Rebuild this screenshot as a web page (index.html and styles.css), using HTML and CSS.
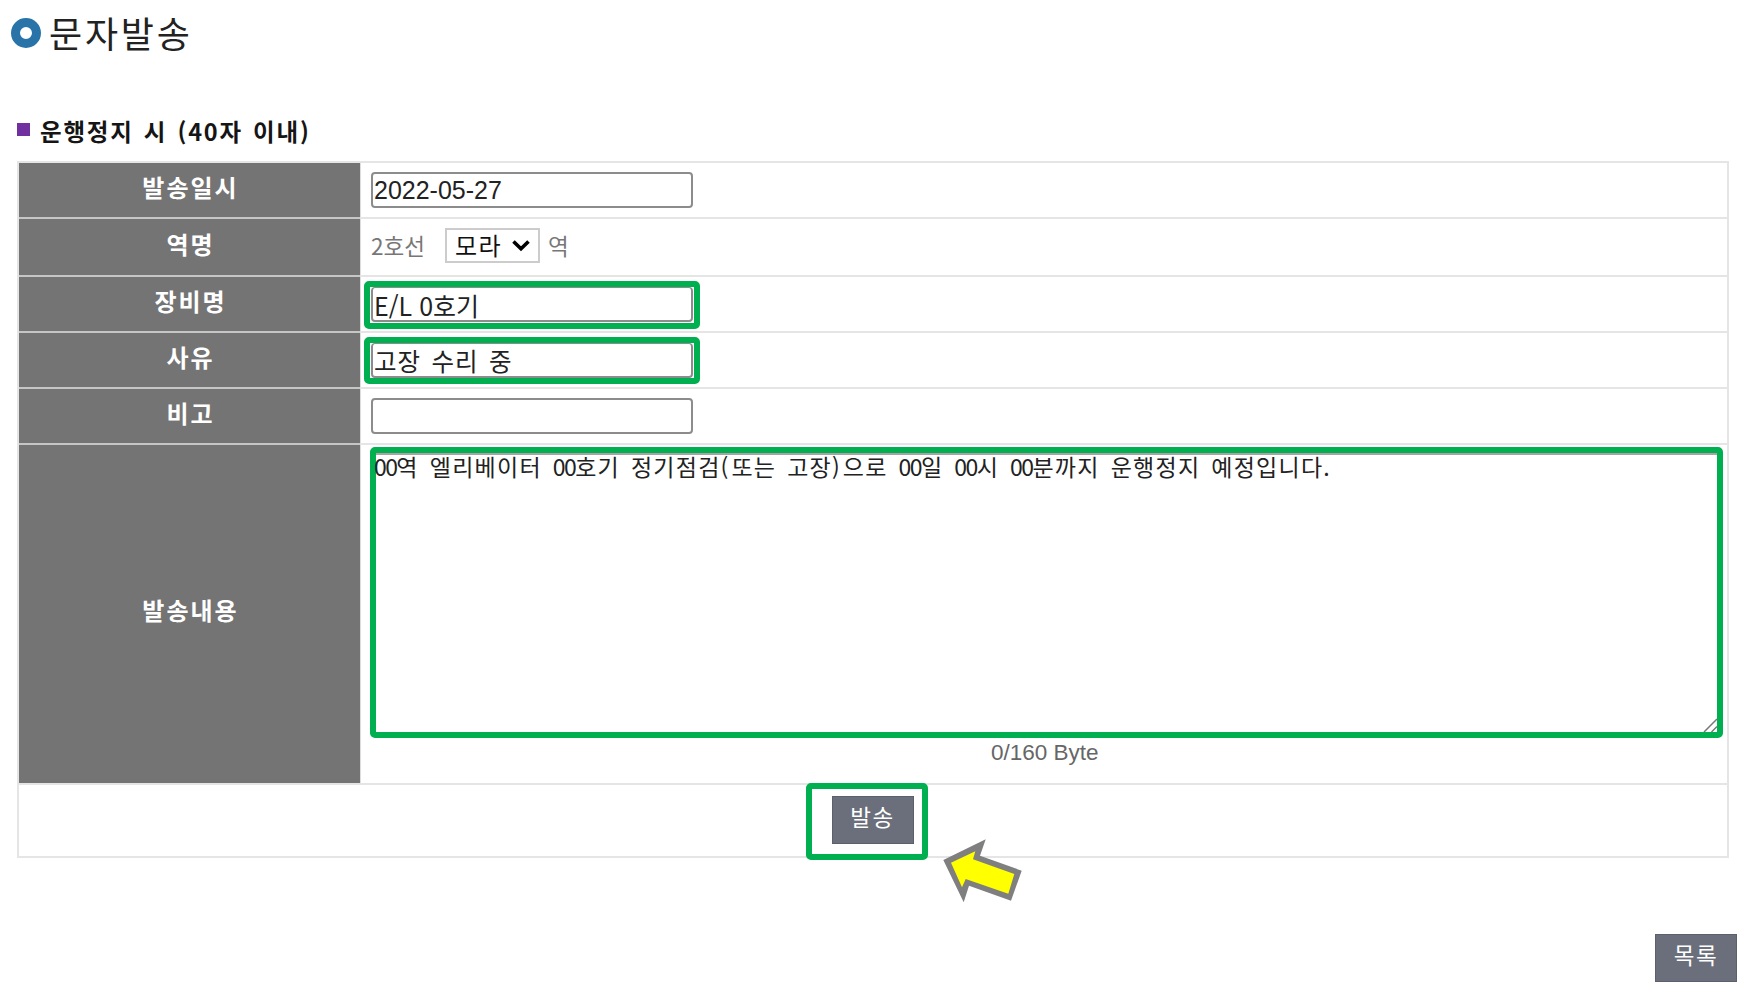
FILE: index.html
```html
<!DOCTYPE html>
<html lang="ko">
<head>
<meta charset="utf-8">
<title>문자발송</title>
<link rel="stylesheet" href="styles.css">
</head>
<body>
<main class="page">
  <header class="title">
    <span class="ring"></span>
    <h1>문자발송</h1>
  </header>
  <div class="subtitle">
    <span class="bullet"></span>
    <h2>운행정지 시 (40자 이내)</h2>
  </div>
  <form class="table">
    <div class="row">
      <label class="head">발송일시</label>
      <div class="cell"><input class="field date" value="2022-05-27"></div>
    </div>
    <div class="row row-station">
      <label class="head">역명</label>
      <div class="cell">
        <span class="line">2호선</span>
        <div class="select"><span>모라</span><svg width="18" height="13" viewBox="0 0 18 13"><path d="M1.500 2.500 9 9.800 16.500 2.500" fill="none" stroke="#000" stroke-width="3.600"/></svg></div>
        <span class="suffix">역</span>
      </div>
    </div>
    <div class="row">
      <label class="head">장비명</label>
      <div class="cell marked"><div class="mark"><input class="field device" value="E/L 0호기"></div></div>
    </div>
    <div class="row">
      <label class="head">사유</label>
      <div class="cell marked"><div class="mark mark-reason"><input class="field reason" value="고장 수리 중"></div></div>
    </div>
    <div class="row">
      <label class="head">비고</label>
      <div class="cell"><input class="field"></div>
    </div>
    <div class="row row-message">
      <label class="head">발송내용</label>
      <div class="cell message">
        <div class="message-box">
          <p><span class="num">00</span>역 엘리베이터 <span class="num">00</span>호기 정기점검<span class="paren">(</span>또는 고장<span class="paren">)</span>으로 <span class="num">00</span>일 <span class="num">00</span>시 <span class="num">00</span>분까지 운행정지 예정입니다.</p>
          <svg class="grip" width="14" height="14" viewBox="0 0 14 14"><path d="M1 14 14 1M8.500 14 14 8.500" fill="none" stroke="#777" stroke-width="1.500"/></svg>
        </div>
        <span class="counter">0/160 Byte</span>
      </div>
    </div>
    <div class="actions">
      <div class="send-mark"><button type="button" class="button">발송</button></div>
      <svg class="arrow" width="80" height="65" viewBox="0 0 80 65">
        <path fill="#7f7f7f" d="M.3 21 42.700.3 37 16.700 78.700 31.700 68 61.700 26 46.700 20.700 63.300Z"/>
        <path fill="#ff0" d="M8 23.700 32.300 12.300 30 20.300 71.300 35 65.300 54.700 22.700 40 19 48.300Z"/>
      </svg>
    </div>
  </form>
  <footer class="footer"><button type="button" class="button">목록</button></footer>
</main>
</body>
</html>
```
FILE: styles.css
```css
* { box-sizing: border-box; }
body {
  margin: 0;
  background: #fff;
  color: #222;
  font-family: "Noto Sans CJK KR", sans-serif;
}
.page { width: 1750px; height: 994px; overflow: hidden; padding: 17px 13px 0 11px; }
.title { display: flex; align-items: center; height: 32px; gap: 8px; }
.ring { width: 30px; height: 30px; border: 9px solid #2874a9; border-radius: 50%; }
h1, h2 { margin: 0; white-space: nowrap; }
h1 { padding-bottom: 3px; font-size: 36px; line-height: 36px; font-weight: 400; letter-spacing: 2.8px; color: #222; }
.subtitle { display: flex; align-items: center; gap: 10px; height: 30px; margin: 69px 0 13px 6px; }
.bullet { width: 13px; height: 13px; background: #7030a0; margin-bottom: 8px; }
h2 { padding-bottom: 4px; font-size: 23.5px; line-height: 30px; font-weight: 700; letter-spacing: 1.8px; word-spacing: 1.8px; color: #151515; }
.table { width: 1712px; margin-left: 6px; border: 2px solid #e5e5e5; }
.row { display: flex; height: 56px; border-bottom: 2px solid #e5e5e5; }
.row-station { height: 58px; }
.row-message { height: 340px; }
.head {
  width: 341px; flex: none;
  display: flex; align-items: center; justify-content: center;
  padding: 0 0 7px 2px;
  background: #747474; color: #fff;
  box-shadow: 0 2px 0 #c6c6c6;
  font-size: 24px; font-weight: 700; letter-spacing: 2px;
}
.row-message .head { box-shadow: none; padding-bottom: 9px; }
.cell { flex: 1; display: flex; align-items: center; padding-left: 10px; border-left: 1px solid #ddd; }
.cell.marked { padding: 1px 0 0 3px; }
.field {
  display: block; width: 322px; height: 36px; padding: 1px 2px;
  border: 2px solid #8c8c8c; border-radius: 4px; outline: 0;
  background: #fff; color: #222;
  font: 25px "Noto Sans CJK KR", sans-serif;
}
.date { font: 25px "Liberation Sans", sans-serif; padding-left: 1px; }
.mark { width: 336px; height: 48px; border: 6px solid #00b050; border-radius: 5px; background: #fff; padding-left: 1px; }
.mark-reason { height: 47px; margin-bottom: 1px; }
.mark .field { height: 35px; border-top-width: 1px; padding: 3px 1px 1px; }
.mark .reason { font-size: 24.5px; letter-spacing: 1px; word-spacing: 2.5px; padding-top: 2px; }
.line, .suffix { padding-bottom: 5px; color: #777; font-size: 22.5px; font-weight: 400; }
.line { width: 74px; }
.select {
  display: flex; align-items: center; justify-content: space-between;
  width: 95px; height: 35px; margin: 0 8px 3px 0; padding: 0 8px;
  border: 2px solid #ccc; color: #111; font-size: 24px;
}
.select span { letter-spacing: 1.5px; padding-bottom: 3px; }
.message { flex-direction: column; align-items: flex-start; padding: 2px 0 0 9px; }
.message-box {
  position: relative; width: 1353px; height: 291px;
  border: 6px solid #00b050; border-radius: 5px;
  box-shadow: inset 0 2px 0 #aaa0a5;
}
.message-box p {
  margin: -2px 0 0 -2px;
  white-space: nowrap; line-height: 30px;
  font-size: 23px; letter-spacing: 1.25px; word-spacing: 3.3px;
}
.num { letter-spacing: -1.6px; }
.paren { letter-spacing: 3px; }
.grip { position: absolute; right: 0; bottom: 0; }
.counter { margin-left: 621px; color: #666; font: 22.5px/30px "Liberation Sans", sans-serif; }
.actions { position: relative; display: flex; justify-content: center; height: 71px; }
.send-mark {
  flex: none; width: 122px; height: 77px; margin: -2px 13px 0 0; padding: 7px 0 0 20px;
  border: 6px solid #00b050; border-radius: 5px; background: #fff;
}
.button {
  display: block; width: 82px; height: 48px; padding: 0 0 9px;
  border: 1px solid #5c606c; border-radius: 0; background: #6b6f7b; color: #fff;
  font: 22.5px "Noto Sans CJK KR", sans-serif; letter-spacing: 1.5px;
}
.arrow { position: absolute; left: 924px; top: 54px; }
.footer { display: flex; justify-content: flex-end; margin-top: 76px; }
```
